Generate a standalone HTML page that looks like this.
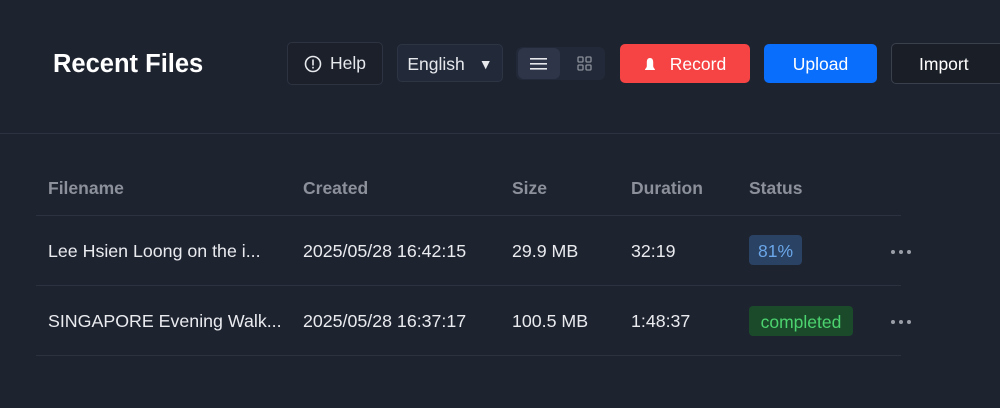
<!DOCTYPE html>
<html><head><style>
*{margin:0;padding:0;box-sizing:border-box}
body{width:1000px;height:408px;background:#1e2330;font-family:"Liberation Sans",sans-serif;color:#e6e8ec;position:relative;overflow:hidden}
.a{position:absolute}
.btn{position:absolute;display:flex;align-items:center;justify-content:center;font-size:17.5px;border-radius:5px}
.th{position:absolute;top:178px;font-size:17.5px;font-weight:bold;color:#8b909a}
.td{position:absolute;font-size:17.8px;color:#e9ebef}
.line{position:absolute;left:36px;width:865px;height:1px;background:#2c3240}
.dots{position:absolute;left:891px;display:flex;gap:4px}
.dots i{width:4px;height:4px;border-radius:50%;background:#9a9ea7;display:block}
</style></head><body>
<div class="a" style="left:53px;top:50px;font-size:25.5px;font-weight:bold;color:#fff">Recent Files</div>
<div class="btn" style="left:287px;top:42px;width:96px;height:43px;border:1px solid #2d3341;background:#1b202b;gap:8px"><svg width="18" height="18" viewBox="0 0 18 18"><circle cx="9" cy="9" r="7.5" fill="none" stroke="#e6e8ec" stroke-width="1.6"/><rect x="8.2" y="4.5" width="1.6" height="6" fill="#e6e8ec"/><rect x="8.2" y="11.8" width="1.6" height="1.7" fill="#e6e8ec"/></svg>Help</div>
<div class="btn" style="left:397px;top:44px;width:106px;height:38px;border:1px solid #2d3545;background:#222a3a;gap:14px;padding-top:2px">English<span style="font-size:14px">▼</span></div>
<div class="a" style="left:516px;top:47px;width:89px;height:33px;background:#222938;border-radius:6px"></div>
<div class="a" style="left:518px;top:48px;width:42px;height:31px;background:#2e3548;border-radius:6px"></div>
<svg class="a" style="left:530px;top:57px" width="18" height="14"><rect y="1" width="17" height="1.6" fill="#e6e8ec"/><rect y="6" width="17" height="1.6" fill="#e6e8ec"/><rect y="11" width="17" height="1.6" fill="#e6e8ec"/></svg>
<svg class="a" style="left:577px;top:56px" width="16" height="16" fill="none" stroke="#8b909a" stroke-width="1.3"><rect x="1" y="1" width="5" height="5" rx="1"/><rect x="9" y="1" width="5" height="5" rx="1"/><rect x="1" y="9" width="5" height="5" rx="1"/><rect x="9" y="9" width="5" height="5" rx="1"/></svg>
<div class="btn" style="left:620px;top:44px;width:130px;height:39px;background:#f64444;color:#fff;gap:14px;padding-top:2px"><svg width="12" height="16" viewBox="0 0 12 16"><path d="M6 1C3.5 1 2.8 3 2.8 5.5V9C2.8 11 1 11.5 1 13H11C11 11.5 9.2 11 9.2 9V5.5C9.2 3 8.5 1 6 1Z" fill="#fff"/></svg>Record</div>
<div class="btn" style="left:764px;top:44px;width:113px;height:39px;background:#0a6efd;color:#fff;padding-top:2px">Upload</div>
<div class="btn" style="left:891px;top:43px;width:120px;height:41px;border:1px solid #3a404c;background:#1a1e27;color:#fff;justify-content:flex-start;padding-left:27px;padding-top:2px">Import</div>
<div class="a" style="left:0;top:133px;width:1000px;height:1px;background:#2c3240"></div>
<div class="th" style="left:48px">Filename</div>
<div class="th" style="left:303px">Created</div>
<div class="th" style="left:512px">Size</div>
<div class="th" style="left:631px">Duration</div>
<div class="th" style="left:749px">Status</div>
<div class="line" style="top:215px"></div>
<div class="line" style="top:285px"></div>
<div class="line" style="top:355px"></div>
<div class="td" style="left:48px;top:241px">Lee Hsien Loong on the i...</div>
<div class="td" style="left:303px;top:241px">2025/05/28 16:42:15</div>
<div class="td" style="left:512px;top:241px">29.9 MB</div>
<div class="td" style="left:631px;top:241px">32:19</div>
<div class="a" style="left:749px;top:235px;width:53px;height:30px;background:#2a4264;border-radius:4px;color:#6aa6e8;font-size:17.5px;display:flex;align-items:center;justify-content:center;padding-top:2px">81%</div>
<div class="dots" style="top:250px"><i></i><i></i><i></i></div>
<div class="td" style="left:48px;top:311px">SINGAPORE Evening Walk...</div>
<div class="td" style="left:303px;top:311px">2025/05/28 16:37:17</div>
<div class="td" style="left:512px;top:311px">100.5 MB</div>
<div class="td" style="left:631px;top:311px">1:48:37</div>
<div class="a" style="left:749px;top:306px;width:104px;height:30px;background:#1a4a2a;border-radius:4px;color:#4cd36f;font-size:17.5px;display:flex;align-items:center;justify-content:center;padding-top:2px">completed</div>
<div class="dots" style="top:320px"><i></i><i></i><i></i></div>
</body></html>
